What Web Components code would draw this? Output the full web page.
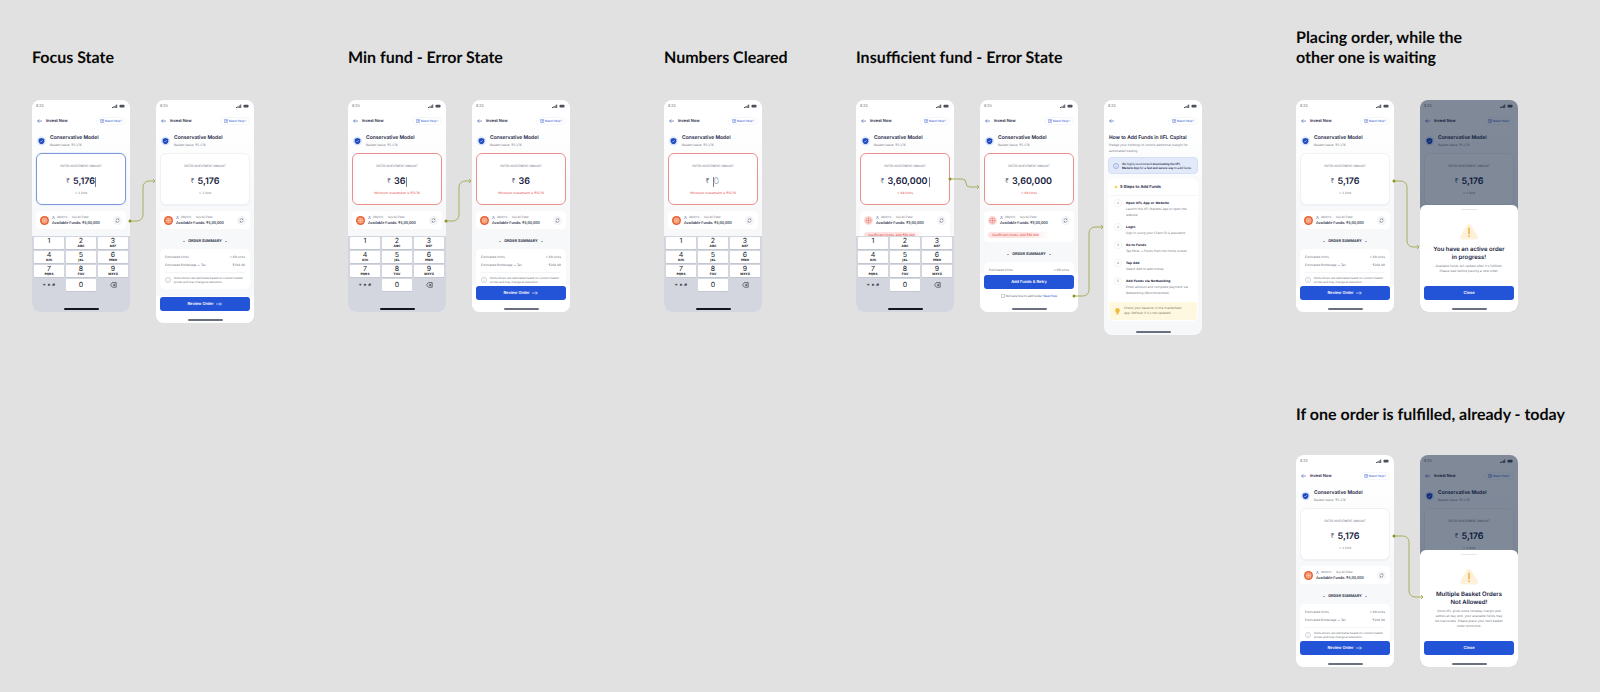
<!DOCTYPE html>
<html lang="en">
<head>
<meta charset="utf-8">
<title>Invest Now – states</title>
<style>
  body { margin: 0; min-height: 100vh; background: #e1e1e1; color: #15203c; font-family: Inter, "Noto Sans", sans-serif; text-rendering: geometricPrecision; }
</style>
</head>
<body>
<flow-board>
  <flow-section heading="Focus State">
    <invest-screen amount="5,176" note="≈ 1 Unit" tone="focus" caret keypad></invest-screen>
    <invest-screen amount="5,176" note="≈ 1 Unit" tall></invest-screen>
    <flow-link slot="link" d="M98 121H105a6 6 0 0 0 6-6V87a6 6 0 0 1 6-6H123" from="98,121" to="123,81"></flow-link>
  </flow-section>

  <flow-section heading="Min fund - Error State">
    <invest-screen amount="36" note="Minimum investment is ₹5176" tone="error" caret keypad></invest-screen>
    <invest-screen amount="36" note="Minimum investment is ₹5176" tone="error"></invest-screen>
    <flow-link slot="link" d="M98 121H105a6 6 0 0 0 6-6V87a6 6 0 0 1 6-6H123" from="98,121" to="123,81"></flow-link>
  </flow-section>

  <flow-section heading="Numbers Cleared">
    <invest-screen amount="" note="Minimum investment is ₹5176" tone="error" caret keypad></invest-screen>
  </flow-section>

  <flow-section heading="Insufficient fund - Error State">
    <invest-screen amount="3,60,000" note="≈ 69 Units" tone="error" short caret keypad></invest-screen>
    <invest-screen amount="3,60,000" note="≈ 69 Units" tone="error" short></invest-screen>
    <guide-screen></guide-screen>
    <flow-link slot="link" d="M94 79H106a4 4 0 0 1 4 4a4 4 0 0 0 4 4H123" from="94,79" to="123,87"></flow-link>
    <flow-link slot="link" d="M218 196H227a6 6 0 0 0 6-6V133a6 6 0 0 1 6-6H247" from="218,196" to="247,127"></flow-link>
  </flow-section>

  <flow-stack>
    <flow-section heading="Placing order, while the|other one is waiting">
      <invest-screen amount="5,176" note="≈ 1 Unit"></invest-screen>
      <invest-screen amount="5,176" note="≈ 1 Unit" dimmed>
        <alert-sheet slot="sheet" heading="You have an active order|in progress!" body="Available funds will update after it’s fulfilled.|Please wait before placing a new order."></alert-sheet>
      </invest-screen>
      <flow-link slot="link" d="M98 81H105a6 6 0 0 1 6 6V141a6 6 0 0 0 6 6H123" from="98,81" to="123,147"></flow-link>
    </flow-section>
    <flow-section heading="If one order is fulfilled, already - today" close>
      <invest-screen amount="5,176" note="≈ 1 Unit"></invest-screen>
      <invest-screen amount="5,176" note="≈ 1 Unit" dimmed>
        <alert-sheet slot="sheet" heading="Multiple Basket Orders|Not Allowed!" body="Since IIFL gives extra intraday margin and|settles at day end, your available funds may|be inaccurate. Please place your next basket|order tomorrow."></alert-sheet>
      </invest-screen>
      <flow-link slot="link" d="M98 81H107a6 6 0 0 1 6 6V136a6 6 0 0 0 6 6H127" from="98,81" to="127,142"></flow-link>
    </flow-section>
  </flow-stack>
</flow-board>

<script>
const lines = s => (s || '').split('|').join('<br>');

class Base extends HTMLElement {
  connectedCallback() {
    if (this.shadowRoot) return;
    this.attachShadow({ mode: 'open' }).innerHTML =
      `<style>*{box-sizing:border-box}h2,h3,p,ol,dl,dd{margin:0;padding:0}button,input{font:inherit;color:inherit;border:0;padding:0;margin:0;background:none;text-rendering:inherit}a{color:inherit;text-decoration:none}svg{display:block;flex:none}${this.css()}</style>${this.html()}`;
  }
}

/* ---------- board ---------- */
customElements.define('flow-board', class extends Base {
  css() { return `:host{display:flex;align-items:flex-start;gap:94px;padding:28px 32px 24px}`; }
  html() { return `<slot></slot>`; }
});

customElements.define('flow-stack', class extends Base {
  css() { return `:host{display:flex;flex-direction:column;gap:93px}`; }
  html() { return `<slot></slot>`; }
});

customElements.define('flow-section', class extends Base {
  css() { return `
    :host{display:block}
    h2{display:flex;align-items:flex-end;width:0;height:40px;margin-bottom:32px;color:#080808;font:700 16px/20px Lato,"Open Sans",sans-serif;white-space:nowrap}
    :host([close]) h2{height:20px;margin-bottom:30px}
    .row{position:relative;display:flex;align-items:flex-start;gap:26px}`; }
  html() { return `<h2><span>${lines(this.getAttribute('heading'))}</span></h2><div class="row"><slot></slot><slot name="link"></slot></div>`; }
});

customElements.define('flow-link', class extends Base {
  css() { return `:host{position:absolute;inset:0;pointer-events:none}svg{width:100%;height:100%;overflow:visible}`; }
  html() {
    const [x, y] = this.getAttribute('from').split(',');
    const [tx, ty] = this.getAttribute('to').split(',').map(Number);
    return `<svg fill="none" stroke="#a9af5c" stroke-width="1" aria-hidden="true"><path d="${this.getAttribute('d')}"/><path d="M${tx - 2} ${ty - 2}L${tx} ${ty}L${tx - 2} ${ty + 2}"/><circle cx="${x}" cy="${y}" r="1.5" fill="#8c9426" stroke="none"/></svg>`;
  }
});

/* ---------- phone parts ---------- */
customElements.define('phone-frame', class extends Base {
  css() { return `
    :host{position:relative;display:flex;flex-direction:column;width:98px;height:var(--frame-h,212px);border-radius:8px;overflow:hidden;background:linear-gradient(#fff 20px,#f7f8fa 120px)}
    .status{flex:none;display:flex;align-items:center;justify-content:space-between;height:12px;padding:0 5px 0 4px;color:#777a82;font:400 4px/6px Roboto,sans-serif}
    nav{flex:none;display:flex;align-items:center;height:17px;padding:0 4px 0 5px}
    .title{margin-left:4px;font:600 4px/6px Inter,sans-serif}
    .help{display:flex;align-items:center;gap:1px;height:8px;margin-left:auto;padding:0 3px;border-radius:4px;border:1px solid #f4f6fb;background:#fff;color:#2f58cf;font:400 3px/6px "DejaVu Sans",sans-serif;white-space:nowrap}
    .content{flex:1;min-height:0;overflow:hidden}`; }
  html() { return `
    <div class="status"><span>8:25</span><svg width="13" height="4" viewBox="0 0 13 4" fill="#4b4f59"><path d="M0 3h1v1H0zM1.4 2.3h1V4h-1zM2.8 1.4h1V4h-1zM4.2.5h1V4h-1z"/><rect x="7.5" y=".8" width="5" height="2.7" rx=".8"/></svg></div>
    <nav><svg width="5" height="4" viewBox="0 0 5 4" fill="none" stroke="#3553b0" stroke-width=".6"><path d="M5 2H.6M2.2.4L.6 2l1.6 1.6"/></svg><span class="title"><slot name="title"></slot></span>
    <a class="help" href="#help"><svg width="4" height="4" viewBox="0 0 4 4" fill="none" stroke="#3a62d4" stroke-width=".5"><rect x=".3" y=".3" width="3.4" height="3.2" rx=".8"/><path d="M1.4 1.4h1.2v.6H2v.5"/></svg>Need Help?</a></nav>
    <div class="content"><slot></slot></div><slot name="footer"></slot><slot name="over"></slot>`; }
});

customElements.define('home-bar', class extends Base {
  css() { return `:host{display:block;width:35px;height:2px;margin:0 auto;border-radius:1px;background:var(--bar,#6b7080)}`; }
  html() { return ``; }
});

customElements.define('key-pad', class extends Base {
  css() { return `
    :host{display:block;flex:none;height:76px;padding:1px 2px 0;background:#d3d6df;--bar:#14161c;border-top:0}
    .keys{display:grid;grid-template-columns:repeat(3,1fr);grid-auto-rows:12px;gap:2px;margin-bottom:17px}
    button{display:flex;flex-direction:column;align-items:center;border-radius:1px;background:#fff;box-shadow:0 1px 0 #c3c7d1;color:#20232b;font:400 7px/8px Inter,sans-serif}
    small{font:700 3px/3px "DejaVu Sans",sans-serif}
    .zero{justify-content:center}
    .plain{background:none;box-shadow:none;justify-content:center;font:700 4px/6px "DejaVu Sans",sans-serif}`; }
  html() {
    const keys = [['1',''],['2','ABC'],['3','DEF'],['4','GHI'],['5','JKL'],['6','MNO'],['7','PQRS'],['8','TUV'],['9','WXYZ']];
    return `<div class="keys">${keys.map(([n, l]) => `<button type="button">${n}<small>${l}</small></button>`).join('')}
      <button type="button" class="plain">+ ∗ #</button><button type="button" class="zero">0</button>
      <button type="button" class="plain" aria-label="Delete"><svg width="7" height="6" viewBox="0 0 7 6" fill="none" stroke="#20232b" stroke-width=".6"><path d="M2.4.6h3.8v4.6H2.4L.5 2.9zM3.2 1.8l2 2.2M5.2 1.8l-2 2.2"/></svg></button></div><home-bar></home-bar>`; }
});

customElements.define('main-button', class extends Base {
  css() { return `
    :host{display:block}
    button{display:flex;align-items:center;justify-content:center;gap:3px;width:100%;height:14px;border-radius:3px;background:#2353d6;color:#fff;font:600 4px/6px Inter,sans-serif}`; }
  html() { return `<button type="button"><slot></slot>${this.hasAttribute('arrow') ? '<svg width="6" height="4" viewBox="0 0 6 4" fill="none" stroke="#fff" stroke-width=".6"><path d="M0 2h5.4M3.8.4L5.4 2 3.8 3.6"/></svg>' : ''}</button>`; }
});

customElements.define('amount-card', class extends Base {
  css() { return `
    :host{display:block;height:52px;margin:0 4px;padding-top:9px;border:1px solid #f0f1f4;border-radius:6px;background:#fff;text-align:center;box-shadow:0 1px 1px #eef0f4}
    :host([tone=focus]){border-color:#7d97dc;box-shadow:0 0 0 1px #eef2fc}
    :host([tone=error]){border-color:#ea8f8c;box-shadow:none}
    label{display:block;color:#7c808c;font:400 3px/6px Roboto,sans-serif}
    .amount{display:flex;align-items:center;justify-content:center;height:16px;margin-top:5px}
    .cur{margin-right:3px;color:#5a6073;font:400 7px/10px "Noto Sans",sans-serif}
    input{display:block;width:var(--w);height:12px;outline:0;font:600 9px/12px Inter,sans-serif;text-align:left}
    input::placeholder{color:#9aa0ae;opacity:1;font-weight:300}
    i{width:1px;height:10px;background:#7c8294}
    p{color:#6c717e;font:400 3px/6px "DejaVu Sans",sans-serif}
    :host([tone=error]) p{color:#e5403b}`; }
  html() {
    const v = this.getAttribute('amount');
    const w = { '36': 12, '5,176': 22, '3,60,000': 41 }[v] || 7;
    const caret = this.hasAttribute('caret') ? '<i></i>' : '';
    return `<label for="amt">ENTER INVESTMENT AMOUNT</label><div class="amount" style="--w:${w}px"><span class="cur">₹</span>${v ? '' : caret}<input id="amt" type="text" inputmode="numeric" value="${v}" placeholder="0">${v ? caret : ''}</div><p>${this.getAttribute('note')}</p>`;
  }
});

customElements.define('funds-card', class extends Base {
  css() { return `
    :host{display:block;margin:6px 4px 0;border-radius:4px;background:#fff}
    .row{display:flex;align-items:center;height:18px;padding:0 4px}
    .text{margin-left:3px;white-space:nowrap}
    .who{color:#747984;font:400 3px/6px Roboto,sans-serif;display:flex;gap:2px;align-items:center}
    .bal{font:500 4px/6px Roboto,sans-serif;color:#2b3247}
    button{display:flex;align-items:center;justify-content:center;width:9px;height:9px;margin-left:auto;border-radius:50%;border:1px solid #eceef2}
    .warn{width:62px;height:6px;margin:3px 4px 0;padding:0 4px;border-radius:3px;background:linear-gradient(90deg,#fde3e1 60%,#fff);color:#e5403b;font:400 3px/6px "DejaVu Sans",sans-serif;white-space:nowrap}
    :host([short]){height:31px}`; }
  html() {
    const short = this.hasAttribute('short');
    const c = short ? ['#fbdedb', '#e8665e', '#fbdedb'] : ['#e9602f', '#fbd3c0', '#f3946f'];
    return `<div class="row"><svg width="9" height="9" viewBox="0 0 9 9"><circle cx="4.5" cy="4.5" r="4.5" fill="${c[0]}"/><circle cx="4.5" cy="4.5" r="2.7" fill="${c[2]}" stroke="${c[1]}" stroke-width=".5"/><path d="M4.5 2.2v4.6M2.2 4.5h4.6" stroke="${c[1]}" stroke-width=".5"/></svg>
      <div class="text"><div class="who"><svg width="3" height="3" viewBox="0 0 3 3" fill="none" stroke="#4a5fae" stroke-width=".4"><circle cx="1.5" cy=".8" r=".6"/><path d="M.3 3a1.2 1.2 0 0 1 2.4 0"/></svg><span>460910</span><span>·</span><span>Sijo Ali Peter</span></div><div class="bal">Available Funds: ₹${short ? '3,00,000' : '4,00,000'}</div></div>
      <button type="button" aria-label="Refresh"><svg width="5" height="5" viewBox="0 0 5 5" fill="none" stroke="#4d5468" stroke-width=".5"><path d="M.7 2.6A1.8 1.8 0 0 1 4 1.5M4.3 2.4A1.8 1.8 0 0 1 1 3.5M4 .6v1H3M1 4.4v-1h1"/></svg></button></div>
      ${short ? '<div class="warn">Insufficient funds. Add ₹60,000</div>' : ''}`;
  }
});

customElements.define('order-summary', class extends Base {
  css() { return `
    :host{display:block}
    h3{display:flex;align-items:center;justify-content:center;gap:3px;height:8px;margin:8px 0 4px;color:#333a4e;font:700 4px/8px Roboto,sans-serif;white-space:nowrap}
    h3::before,h3::after{content:"";width:2px;height:1px;background:#a5a9b4}
    .card{margin:0 4px;padding:4px 5px 5px;border-radius:5px;background:#fff}
    dl div{display:flex;justify-content:space-between;height:8px;color:#6e727e;font:400 3px/8px "DejaVu Sans",sans-serif;white-space:nowrap}
    .note{display:flex;align-items:center;gap:3px;margin-top:3px;padding-top:3px;border-top:1px solid #f4f5f7;color:#747884;font:400 3px/4px Roboto,sans-serif;white-space:nowrap}`; }
  html() { return `<h3>ORDER SUMMARY</h3><div class="card"><dl><div><dt>Estimated Units</dt><dd>≈ 69 units</dd></div><div><dt>Estimated Brokerage + Tax</dt><dd>₹204.00</dd></div></dl>
    <div class="note"><svg width="6" height="6" viewBox="0 0 6 6" fill="none" stroke="#a9adb8" stroke-width=".5"><circle cx="3" cy="3" r="2.6"/><path d="M3 2.7v1.7M3 1.5v.6"/></svg><p>Units shown are estimates based on current market<br>prices and may change at execution</p></div></div>`; }
});

/* ---------- screens ---------- */
customElements.define('invest-screen', class extends Base {
  css() { return `
    :host{display:block;flex:none}
    :host([tall]){--frame-h:223px}
    .head{display:flex;align-items:center;gap:4px;height:24px;padding:0 5px;white-space:nowrap}
    .head div{padding-top:2px}
    .head h3{font:600 5px/7px Inter,sans-serif}
    .head p{color:#747884;font:400 3px/7px "DejaVu Sans",sans-serif}
    footer{flex:none;display:block;padding:1px 4px 2px;background:#fff}
    footer home-bar{margin-top:8px}
    footer.wide{padding-top:2px}
    footer.wide home-bar{margin-top:9px}
    .ask{display:flex;justify-content:center;align-items:center;gap:1px;margin-top:4px;color:#5c6170;font:400 3px/6px Roboto,sans-serif;white-space:nowrap}
    .ask a{color:#2353d6}
    .veil{position:absolute;inset:0;background:rgba(0,20,50,.5);display:flex;flex-direction:column;justify-content:flex-end}`; }
  html() {
    const has = n => this.hasAttribute(n), tone = this.getAttribute('tone') || '';
    const footer = has('dimmed') ? '' : has('keypad') ? '<key-pad slot="footer"></key-pad>'
      : has('short') ? `<footer slot="footer" class="wide"><main-button>Add Funds &amp; Retry</main-button><div class="ask"><svg width="4" height="4" viewBox="0 0 4 4" fill="none" stroke="#5c6170" stroke-width=".4"><rect x=".3" y=".3" width="3.4" height="3.2" rx="1"/></svg><span>Not sure how to add funds? <a href="#help">Need Help</a></span></div><home-bar></home-bar></footer>`
      : '<footer slot="footer"><main-button arrow>Review Order</main-button><home-bar></home-bar></footer>';
    return `<phone-frame><span slot="title">Invest Now</span>
      <div class="head"><svg width="9" height="10" viewBox="0 0 9 10"><circle cx="4.5" cy="5" r="4.5" fill="#d9e6fc"/><path d="M4.5 2l2.8.9v2.3c0 1.6-1.2 2.5-2.8 3.1C2.9 7.7 1.7 6.8 1.7 5.2V2.9z" fill="#1f49bd"/><path d="M3.3 5l.9.9 1.6-1.7" fill="none" stroke="#fff" stroke-width=".5"/></svg><div><h3>Conservative Model</h3><p>Basket Value: ₹5,176</p></div></div>
      <amount-card amount="${this.getAttribute('amount')}" note="${this.getAttribute('note')}" tone="${tone}" ${has('caret') ? 'caret' : ''}></amount-card>
      ${has('dimmed') ? '' : `<funds-card ${has('short') ? 'short' : ''}></funds-card>`}${has('dimmed') || has('keypad') ? '' : '<order-summary></order-summary>'}
      ${footer}${has('dimmed') ? '<div class="veil" slot="over"><slot name="sheet"></slot></div>' : ''}</phone-frame>`;
  }
});

customElements.define('alert-sheet', class extends Base {
  css() { return `
    :host{display:block;padding:4px 4px 2px;border-radius:6px 6px 0 0;background:#fff;text-align:center}
    .grip{width:16px;height:1px;margin:0 auto 13px;background:#e6e8ec}
    svg{margin:0 auto 6px}
    h3{font:600 6px/8px Inter,sans-serif;white-space:nowrap}
    p{margin:2px 0 12px;color:#747884;font:400 3px/5px "DejaVu Sans",sans-serif;white-space:nowrap}
    home-bar{margin-top:8px}`; }
  html() { return `<div class="grip"></div><svg width="20" height="17" viewBox="0 0 20 17"><path d="M8 2Q10-.5 12 2L18.6 13Q20 16.5 16 16.5H4Q0 16.5 1.4 13z" fill="#fef1da"/><path d="M10 5v6" stroke="#f29a1c" stroke-width="1.2" stroke-linecap="round"/><circle cx="10" cy="13.3" r=".8" fill="#f29a1c"/></svg>
    <h3>${lines(this.getAttribute('heading'))}</h3><p>${lines(this.getAttribute('body'))}</p><main-button>Close</main-button><home-bar></home-bar>`; }
});

customElements.define('guide-screen', class extends Base {
  css() { return `
    :host{display:block;flex:none;--frame-h:235px}
    .intro{padding:6px 5px 0;white-space:nowrap}
    .intro h2{font:600 5px/7px Inter,sans-serif}
    .intro p{color:#747884;font:400 3px/6px "DejaVu Sans",sans-serif}
    .info{display:flex;align-items:center;gap:3px;height:17px;margin:3px 4px 5px;padding:0 4px;border:1px solid #d5dff5;border-radius:4px;background:#e2eafa;font:400 3px/4px Roboto,sans-serif;white-space:nowrap}
    .info b{font-weight:500}
    .card{margin:0 4px;padding:0 1px 1px;border-radius:5px;background:#fff}
    .card h3{display:flex;align-items:center;gap:2px;height:17px;margin-bottom:4px;padding:0 5px;border-bottom:1px solid #f5f6f8;font:600 4px/6px Inter,sans-serif}
    ol{list-style:none;display:grid;gap:6px;padding:0 6px;color:#747884;font:400 3px/6px "DejaVu Sans",sans-serif;white-space:nowrap}
    li{display:grid;grid-template-columns:6px 1fr;gap:5px}
    .n{height:6px;border-radius:3px;box-shadow:0 0 0 1px #f4f5f7;text-align:center;color:#5c6170}
    li b{display:block;color:#15203c}
    .tip{display:flex;align-items:center;gap:4px;height:18px;margin-top:6px;padding:0 6px;border-radius:0 0 4px 4px;background:#fef8e0;color:#7a7766;font:400 3px/5px "DejaVu Sans",sans-serif;white-space:nowrap}
    home-bar{margin-bottom:2px}`; }
  html() {
    const steps = [['Open IIFL App or Website', 'Launch the IIFL Markets app or open the|website'], ['Login', 'Sign in using your Client ID &amp; password'], ['Go to Funds', 'Tap More → Funds from the home screen'], ['Tap Add', 'Select Add to add money'], ['Add Funds via Netbanking', 'Enter amount and complete payment via|Netbanking (Recommended)']];
    return `<phone-frame><div class="intro"><h2>How to Add Funds in IIFL Capital</h2><p>Pledge your holdings to unlock additional margin for<br>automated trading.</p></div>
      <div class="info"><svg width="6" height="6" viewBox="0 0 6 6" fill="none" stroke="#7089c9" stroke-width=".5"><circle cx="3" cy="3" r="2.6"/><path d="M3 2.7v1.7M3 1.5v.6"/></svg><p>We highly recommend <b>downloading the IIFL<br>Markets App</b> for a <b>fast and secure way</b> to add funds</p></div>
      <div class="card"><h3><svg width="4" height="4" viewBox="0 0 4 4"><path d="M2 0l.6 1.4L4 2l-1.4.6L2 4l-.6-1.4L0 2l1.4-.6z" fill="#f5c518"/></svg>5 Steps to Add Funds</h3>
      <ol>${steps.map(([t, d], i) => `<li><span class="n">${i + 1}</span><div><b>${t}</b>${lines(d)}</div></li>`).join('')}</ol>
      <div class="tip"><svg width="5" height="7" viewBox="0 0 5 7" fill="#efbd3a"><circle cx="2.5" cy="2.4" r="2.3"/><path d="M1.5 4h2v2.5h-2z"/></svg><p>Check your balance in the marketfeed<br>app. Refresh if it’s not updated</p></div></div>
      <home-bar slot="footer"></home-bar></phone-frame>`;
  }
});
</script>
</body>
</html>
